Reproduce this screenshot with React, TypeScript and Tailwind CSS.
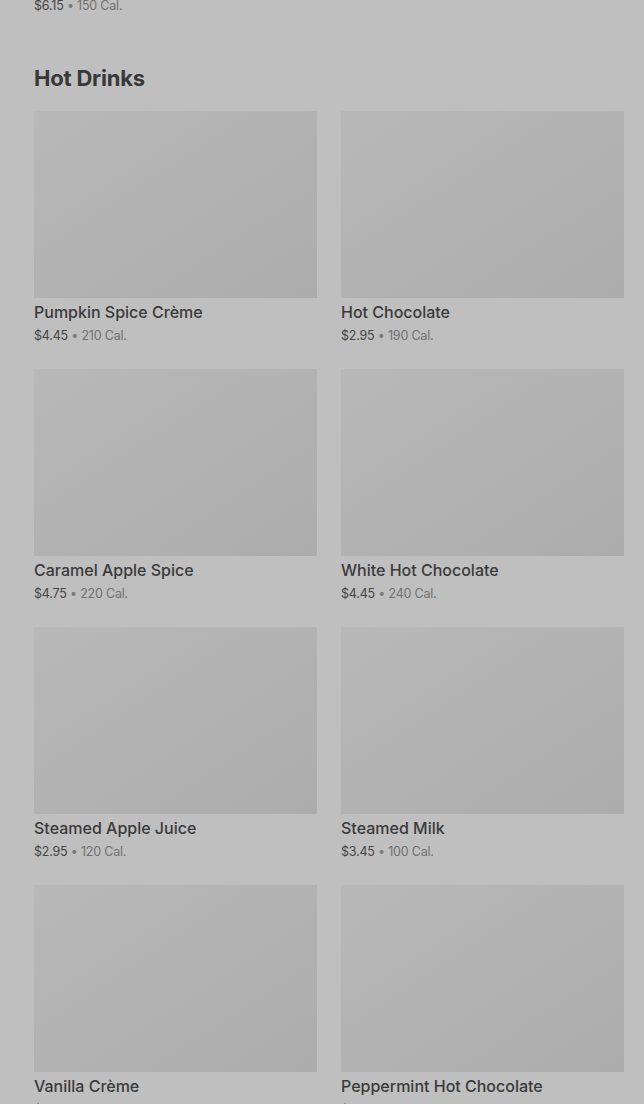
import React from "react";

type Drink = { name: string; price: string; cal: string };

const drinks: Drink[] = [
  { name: "Pumpkin Spice Crème", price: "$4.45", cal: "210 Cal." },
  { name: "Hot Chocolate", price: "$2.95", cal: "190 Cal." },
  { name: "Caramel Apple Spice", price: "$4.75", cal: "220 Cal." },
  { name: "White Hot Chocolate", price: "$4.45", cal: "240 Cal." },
  { name: "Steamed Apple Juice", price: "$2.95", cal: "120 Cal." },
  { name: "Steamed Milk", price: "$3.45", cal: "100 Cal." },
  { name: "Vanilla Crème", price: "$3.65", cal: "200 Cal." },
  { name: "Peppermint Hot Chocolate", price: "$3.95", cal: "370 Cal." },
];

const PriceLine = ({ price, cal }: { price: string; cal: string }) => (
  <p className="text-[12.5px] leading-[18px] tracking-[-0.2px]">
    <span className="text-[#454545]">{price}</span>
    <span className="text-[#7a7a7a]"> • </span>
    <span className="text-[#707070]">{cal}</span>
  </p>
);

const DrinkCard = ({ drink }: { drink: Drink }) => (
  <div className="flex flex-col">
    <div className="h-[187px] w-full bg-gradient-to-br from-[#b8b8b8] to-[#acacac]" />
    <p className="mt-[4px] text-[16px] leading-[20px] font-medium text-[#3a3a3a]">
      {drink.name}
    </p>
    <div className="mt-[5px]">
      <PriceLine price={drink.price} cal={drink.cal} />
    </div>
  </div>
);

export default function App() {
  return (
    <div
      className="h-[1104px] overflow-hidden bg-[#bfbfbf] pl-[34px] pr-[20px]"
      style={{ fontFamily: "Inter, 'Noto Sans', sans-serif" }}
    >
      <div className="-mt-[3px]">
        <PriceLine price="$6.15" cal="150 Cal." />
      </div>
      <h2 className="mt-[49px] text-[22px] leading-[28px] font-bold tracking-[-0.2px] text-[#383838]">
        Hot Drinks
      </h2>
      <div className="mt-[19px] grid grid-cols-2 gap-x-[24px] gap-y-[24px]">
        {drinks.map((d) => (
          <DrinkCard key={d.name} drink={d} />
        ))}
      </div>
    </div>
  );
}
